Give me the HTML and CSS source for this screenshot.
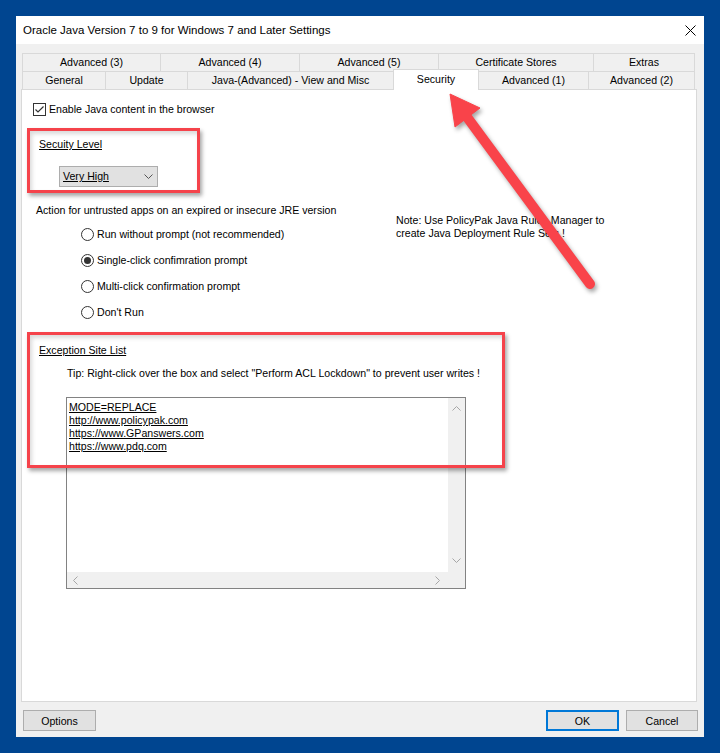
FILE: index.html
```html
<!DOCTYPE html>
<html>
<head>
<meta charset="utf-8">
<title>Oracle Java Settings</title>
<link rel="stylesheet" href="styles.css">
</head>
<body>
<div class="window">
  <div class="titlebar">
    <span class="title">Oracle Java Version 7 to 9 for Windows 7 and Later Settings</span>
    <svg class="close" width="11" height="11" viewBox="0 0 11 11"><path d="M0.5 0.5 L10.5 10.5 M10.5 0.5 L0.5 10.5" stroke="#000" stroke-width="1" fill="none"/></svg>
  </div>
  <div class="dialog">
    <div class="tabs">
      <div class="tabrow">
        <div class="tab t-adv3">Advanced (3)</div>
        <div class="tab t-adv4">Advanced (4)</div>
        <div class="tab t-adv5">Advanced (5)</div>
        <div class="tab t-cert">Certificate Stores</div>
        <div class="tab t-extras last">Extras</div>
      </div>
      <div class="tabrow row2">
        <div class="tab t-general">General</div>
        <div class="tab t-update">Update</div>
        <div class="tab t-java">Java-(Advanced) - View and Misc</div>
        <div class="tab t-security active">Security</div>
        <div class="tab t-adv1 after-active">Advanced (1)</div>
        <div class="tab t-adv2 last">Advanced (2)</div>
      </div>
    </div>
    <div class="panel">
      <div class="check-row">
        <svg class="checkbox" width="13" height="13" viewBox="0 0 13 13"><rect x="0.5" y="0.5" width="12" height="12" fill="#fff" stroke="#333"/><path d="M2.5 6.5 L5 9 L10.5 3.5" stroke="#333" stroke-width="1.2" fill="none"/></svg>
        <span>Enable Java content in the browser</span>
      </div>
      <div class="section-label level-label">Secuity Level</div>
      <div class="select">
        <span class="select-value">Very High</span>
        <svg width="9" height="5" viewBox="0 0 9 5"><path d="M0.5 0.5 L4.5 4.5 L8.5 0.5" stroke="#555" fill="none"/></svg>
      </div>
      <div class="action-row">
        <div class="action-col">
          <div class="action-text">Action for untrusted apps on an expired or insecure JRE version</div>
          <div class="radios">
            <div class="radio-row first"><span class="radio"></span><span>Run without prompt (not recommended)</span></div>
            <div class="radio-row"><span class="radio checked"></span><span>Single-click confimration prompt</span></div>
            <div class="radio-row"><span class="radio"></span><span>Multi-click confirmation prompt</span></div>
            <div class="radio-row"><span class="radio"></span><span>Don't Run</span></div>
          </div>
        </div>
        <div class="note">Note: Use PolicyPak Java Rules Manager to<br>create Java Deployment Rule Sets !</div>
      </div>
      <div class="section-label exc-label">Exception Site List</div>
      <div class="tip">Tip: Right-click over the box and select "Perform ACL Lockdown" to prevent user writes !</div>
      <div class="listbox">
        <div class="list-content">
          <div>MODE=REPLACE</div>
          <div>http://www.policypak.com</div>
          <div>https://www.GPanswers.com</div>
          <div>https://www.pdq.com</div>
        </div>
        <div class="vscroll">
          <svg width="9" height="5" viewBox="0 0 9 5"><path d="M0.5 4.5 L4.5 0.5 L8.5 4.5" stroke="#a6a6a6" fill="none"/></svg>
          <svg width="9" height="5" viewBox="0 0 9 5"><path d="M0.5 0.5 L4.5 4.5 L8.5 0.5" stroke="#a6a6a6" fill="none"/></svg>
        </div>
        <div class="hscroll">
          <svg width="5" height="9" viewBox="0 0 5 9"><path d="M4.5 0.5 L0.5 4.5 L4.5 8.5" stroke="#a6a6a6" fill="none"/></svg>
          <svg width="5" height="9" viewBox="0 0 5 9"><path d="M0.5 0.5 L4.5 4.5 L0.5 8.5" stroke="#a6a6a6" fill="none"/></svg>
        </div>
        <div class="corner"></div>
      </div>
      <div class="annot annot-level"></div>
      <div class="annot annot-exc"></div>
    </div>
    <div class="buttons">
      <button class="btn">Options</button>
      <span class="spacer"></span>
      <button class="btn btn-default">OK</button>
      <button class="btn btn-cancel">Cancel</button>
    </div>
  </div>
</div>
<svg class="arrow" width="720" height="753" viewBox="0 0 720 753">
  <line x1="590" y1="284" x2="464" y2="113" stroke="#f9434a" stroke-width="10" stroke-linecap="round"/>
  <polygon points="450,94 455,127 480,108" fill="#f9434a" stroke="#f9434a" stroke-width="1" stroke-linejoin="round"/>
</svg>
</body>
</html>
```

FILE: styles.css
```css
body {
  margin: 0;
  background: #004590;
  font-family: "Liberation Sans", Arial, sans-serif;
  font-size: 10.6px;
  color: #000;
  position: relative;
  width: 720px;
  height: 753px;
  overflow: hidden;
}

.window {
  margin: 16px 0 0 16px;
  width: 688px;
  height: 721px;
  background: #f0f0f0;
  display: flex;
  flex-direction: column;
}

.titlebar {
  height: 28px;
  background: #fff;
  display: flex;
  align-items: center;
  padding: 0 8px 0 7px;
  flex: none;
}

.title {
  flex: 1;
  font-size: 11.5px;
}

.dialog {
  flex: 1;
  display: flex;
  flex-direction: column;
  padding: 9px 7px 6px 5px;
  min-height: 0;
}

.tabs {
  margin: 0 2px 0 1px;
  position: relative;
  z-index: 2;
  flex: none;
}

.tabrow {
  display: flex;
  height: 18px;
}

.row2 {
  align-items: flex-end;
}

.tab {
  box-sizing: border-box;
  height: 18px;
  border-top: 1px solid #d9d9d9;
  border-left: 1px solid #d9d9d9;
  background: #f0f0f0;
  display: flex;
  align-items: center;
  justify-content: center;
  line-height: 13px;
  white-space: nowrap;
  flex: none;
}

.tab.last {
  border-right: 1px solid #d9d9d9;
}

.tab.active {
  height: 21px;
  margin-bottom: -1px;
  background: #fff;
  border-right: 1px solid #d9d9d9;
  align-items: flex-start;
  padding-top: 3px;
  position: relative;
  z-index: 3;
}

.tab.after-active {
  border-left: none;
}

.t-adv3 { width: 138px; }
.t-adv4 { width: 139px; }
.t-adv5 { width: 139px; }
.t-cert { width: 155px; }
.t-extras { width: 102px; }
.t-general { width: 83px; }
.t-update { width: 82px; }
.t-java { width: 206px; }
.t-security { width: 86px; }
.t-adv1 { width: 109px; }
.t-adv2 { width: 107px; }

.panel {
  flex: 1;
  background: #fff;
  border: 1px solid #d9d9d9;
  position: relative;
  z-index: 1;
  line-height: 13px;
}

.check-row {
  display: flex;
  align-items: center;
  gap: 3px;
  height: 13px;
  margin: 13px 0 0 11px;
}

.checkbox {
  display: block;
  flex: none;
}

.section-label {
  text-decoration: underline;
  margin-left: 17px;
}

.level-label {
  margin-top: 22px;
}

.select {
  box-sizing: border-box;
  margin: 15px 0 0 37px;
  width: 99px;
  height: 21px;
  border: 1px solid #adadad;
  background: #e1e1e1;
  display: flex;
  align-items: center;
  justify-content: space-between;
  padding: 0 4px 0 3px;
}

.select-value {
  text-decoration: underline;
}

.action-row {
  display: flex;
  margin: 17px 0 0 14px;
}

.action-col {
  width: 360px;
  flex: none;
}

.note {
  margin-top: 10px;
}

.radios {
  margin-left: 45px;
}

.radio-row {
  display: flex;
  align-items: center;
  gap: 3px;
  height: 13px;
  margin-top: 13px;
}

.radio-row.first {
  margin-top: 11px;
}

.radio {
  box-sizing: border-box;
  width: 13px;
  height: 13px;
  border: 1px solid #333;
  border-radius: 50%;
  display: flex;
  align-items: center;
  justify-content: center;
  flex: none;
}

.radio.checked::after {
  content: "";
  width: 7px;
  height: 7px;
  border-radius: 50%;
  background: #333;
}

.exc-label {
  margin-top: 25px;
}

.tip {
  margin: 10px 0 0 45px;
}

.listbox {
  box-sizing: border-box;
  margin: 17px 0 0 44px;
  width: 400px;
  height: 192px;
  border: 1px solid #828282;
  display: grid;
  grid-template-columns: 1fr 17px;
  grid-template-rows: 1fr 16px;
  background: #f0f0f0;
}

.list-content {
  background: #fff;
  padding: 3px 2px;
  text-decoration: underline;
}

.vscroll {
  display: flex;
  flex-direction: column;
  align-items: center;
  justify-content: space-between;
  padding: 8px 0 9px;
}

.vscroll svg,
.hscroll svg {
  display: block;
}

.hscroll {
  display: flex;
  align-items: center;
  justify-content: space-between;
  padding: 0 8px 0 6px;
}

.corner {
  background: #f0f0f0;
}

.annot {
  position: absolute;
  box-sizing: border-box;
  border: 3px solid #f5434b;
  box-shadow: 2px 3px 4px rgba(0, 0, 0, 0.35), inset 2px 3px 4px rgba(0, 0, 0, 0.15);
  z-index: 5;
}

.annot-level {
  left: 5px;
  top: 38px;
  width: 173px;
  height: 65px;
}

.annot-exc {
  left: 5px;
  top: 242px;
  width: 478px;
  height: 136px;
}

.buttons {
  display: flex;
  margin: 8px -1px 0 2px;
  height: 21px;
  flex: none;
}

.spacer {
  flex: 1;
}

.btn {
  box-sizing: border-box;
  width: 73px;
  height: 21px;
  background: #e1e1e1;
  border: 1px solid #adadad;
  font: inherit;
  color: #000;
  padding: 0;
}

.btn-default {
  border: 2px solid #0078d7;
}

.btn-cancel {
  width: 72px;
  margin-left: 7px;
}

.arrow {
  position: absolute;
  left: 0;
  top: 0;
  pointer-events: none;
  filter: drop-shadow(2px 3px 2px rgba(0, 0, 0, 0.35));
  z-index: 10;
}
```
